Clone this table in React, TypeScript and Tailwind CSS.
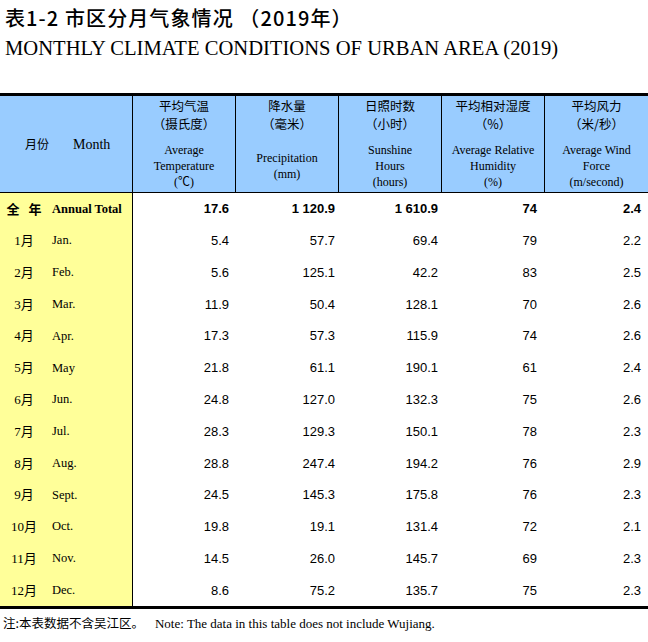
import React from "react";

const rows: string[][] = [
  ["1月", "Jan.", "5.4", "57.7", "69.4", "79", "2.2"],
  ["2月", "Feb.", "5.6", "125.1", "42.2", "83", "2.5"],
  ["3月", "Mar.", "11.9", "50.4", "128.1", "70", "2.6"],
  ["4月", "Apr.", "17.3", "57.3", "115.9", "74", "2.6"],
  ["5月", "May", "21.8", "61.1", "190.1", "61", "2.4"],
  ["6月", "Jun.", "24.8", "127.0", "132.3", "75", "2.6"],
  ["7月", "Jul.", "28.3", "129.3", "150.1", "78", "2.3"],
  ["8月", "Aug.", "28.8", "247.4", "194.2", "76", "2.9"],
  ["9月", "Sept.", "24.5", "145.3", "175.8", "76", "2.3"],
  ["10月", "Oct.", "19.8", "19.1", "131.4", "72", "2.1"],
  ["11月", "Nov.", "14.5", "26.0", "145.7", "69", "2.3"],
  ["12月", "Dec.", "8.6", "75.2", "135.7", "75", "2.3"],
];

const padClasses = ["pr-[7px]", "pr-[4px]", "pr-[4px]", "pr-[8px]", "pr-[7px]"];

const headers: { zh: string[]; en: string[] }[] = [
  { zh: ["平均气温", "（摄氏度）"], en: ["Average", "Temperature", "(℃)"] },
  { zh: ["降水量", "（毫米）"], en: ["Precipitation", "(mm)"] },
  { zh: ["日照时数", "（小时）"], en: ["Sunshine", "Hours", "(hours)"] },
  { zh: ["平均相对湿度", "（%）"], en: ["Average Relative", "Humidity", "(%)"] },
  { zh: ["平均风力", "（米/秒）"], en: ["Average Wind", "Force", "(m/second)"] },
];

function Row({
  zh,
  en,
  vals,
  bold,
}: {
  zh: React.ReactNode;
  en: string;
  vals: string[];
  bold?: boolean;
}) {
  return (
    <div className="grid grid-cols-[133px_repeat(5,103px)] h-[31.8px]">
      <div className="bg-[#ffff99] border-r border-black flex items-center">
        <div
          className={`w-[48px] flex justify-center text-[13px] font-['Liberation_Serif','Noto_Sans_CJK_SC',serif] ${
            bold ? "font-bold" : ""
          }`}
        >
          {zh}
        </div>
        <div
          className={`ml-[4px] text-[12.5px] font-['Liberation_Serif',serif] ${
            bold ? "font-bold" : ""
          }`}
        >
          {en}
        </div>
      </div>
      {vals.map((v, i) => (
        <div
          key={i}
          className={`flex items-center justify-end text-[13px] font-['Liberation_Sans',Arial,sans-serif] ${padClasses[i]} ${
            bold ? "font-bold" : ""
          }`}
        >
          {v}
        </div>
      ))}
    </div>
  );
}

export default function App() {
  return (
    <div className="w-[648px] h-[642px] bg-white text-black overflow-hidden">
      <div className="pt-[4px] pl-[5px]">
        <div className="h-[28px] leading-[28px] text-[20px] font-medium tracking-[1.1px] font-['Noto_Sans_CJK_SC',sans-serif] whitespace-nowrap">
          表1-2 市区分月气象情况 （2019年）
        </div>
        <div className="mt-[2px] h-[28px] leading-[28px] text-[20.6px] font-['Liberation_Serif',serif] whitespace-nowrap">
          MONTHLY CLIMATE CONDITIONS OF URBAN AREA (2019)
        </div>
      </div>

      <div className="mt-[31px] border-t-[3px] border-b-[3px] border-black">
        <div className="grid grid-cols-[133px_repeat(5,103px)] h-[97px] bg-[#99ccff] border-b border-black">
          <div className="border-r border-black flex items-center">
            <span className="ml-[25px] text-[12px] font-['Noto_Sans_CJK_SC',sans-serif]">
              月份
            </span>
            <span className="ml-[24px] text-[14px] font-['Liberation_Serif',serif]">
              Month
            </span>
          </div>
          {headers.map((h, i) => (
            <div
              key={i}
              className={`flex flex-col items-center ${i < 4 ? "border-r border-black" : ""}`}
            >
              <div className="pt-[1px] text-[12.5px] leading-[18px] text-center font-['Noto_Sans_CJK_SC',sans-serif] whitespace-nowrap">
                {h.zh.map((z, j) => (
                  <div key={j}>{z}</div>
                ))}
              </div>
              <div className="flex-1 pt-[6px] flex flex-col items-center justify-center text-[12px] leading-[16px] text-center font-['Liberation_Serif','Noto_Sans_CJK_SC',serif] whitespace-nowrap">
                {h.en.map((e, j) => (
                  <div key={j}>{e}</div>
                ))}
              </div>
            </div>
          ))}
        </div>

        <Row
          zh={
            <span className="flex gap-[9px] font-['Noto_Sans_CJK_SC',sans-serif]">
              <span>全</span>
              <span>年</span>
            </span>
          }
          en="Annual Total"
          vals={["17.6", "1 120.9", "1 610.9", "74", "2.4"]}
          bold
        />
        {rows.map((r) => (
          <Row key={r[0]} zh={r[0]} en={r[1]} vals={r.slice(2)} />
        ))}
      </div>

      <div className="pl-[3px] h-[28px] flex items-center whitespace-nowrap">
        <span className="text-[12.5px] font-['Noto_Sans_CJK_SC',sans-serif]">
          注:本表数据不含吴江区。
        </span>
        <span className="ml-[11px] text-[13px] font-['Liberation_Serif',serif]">
          Note: The data in this table does not include Wujiang.
        </span>
      </div>
    </div>
  );
}
